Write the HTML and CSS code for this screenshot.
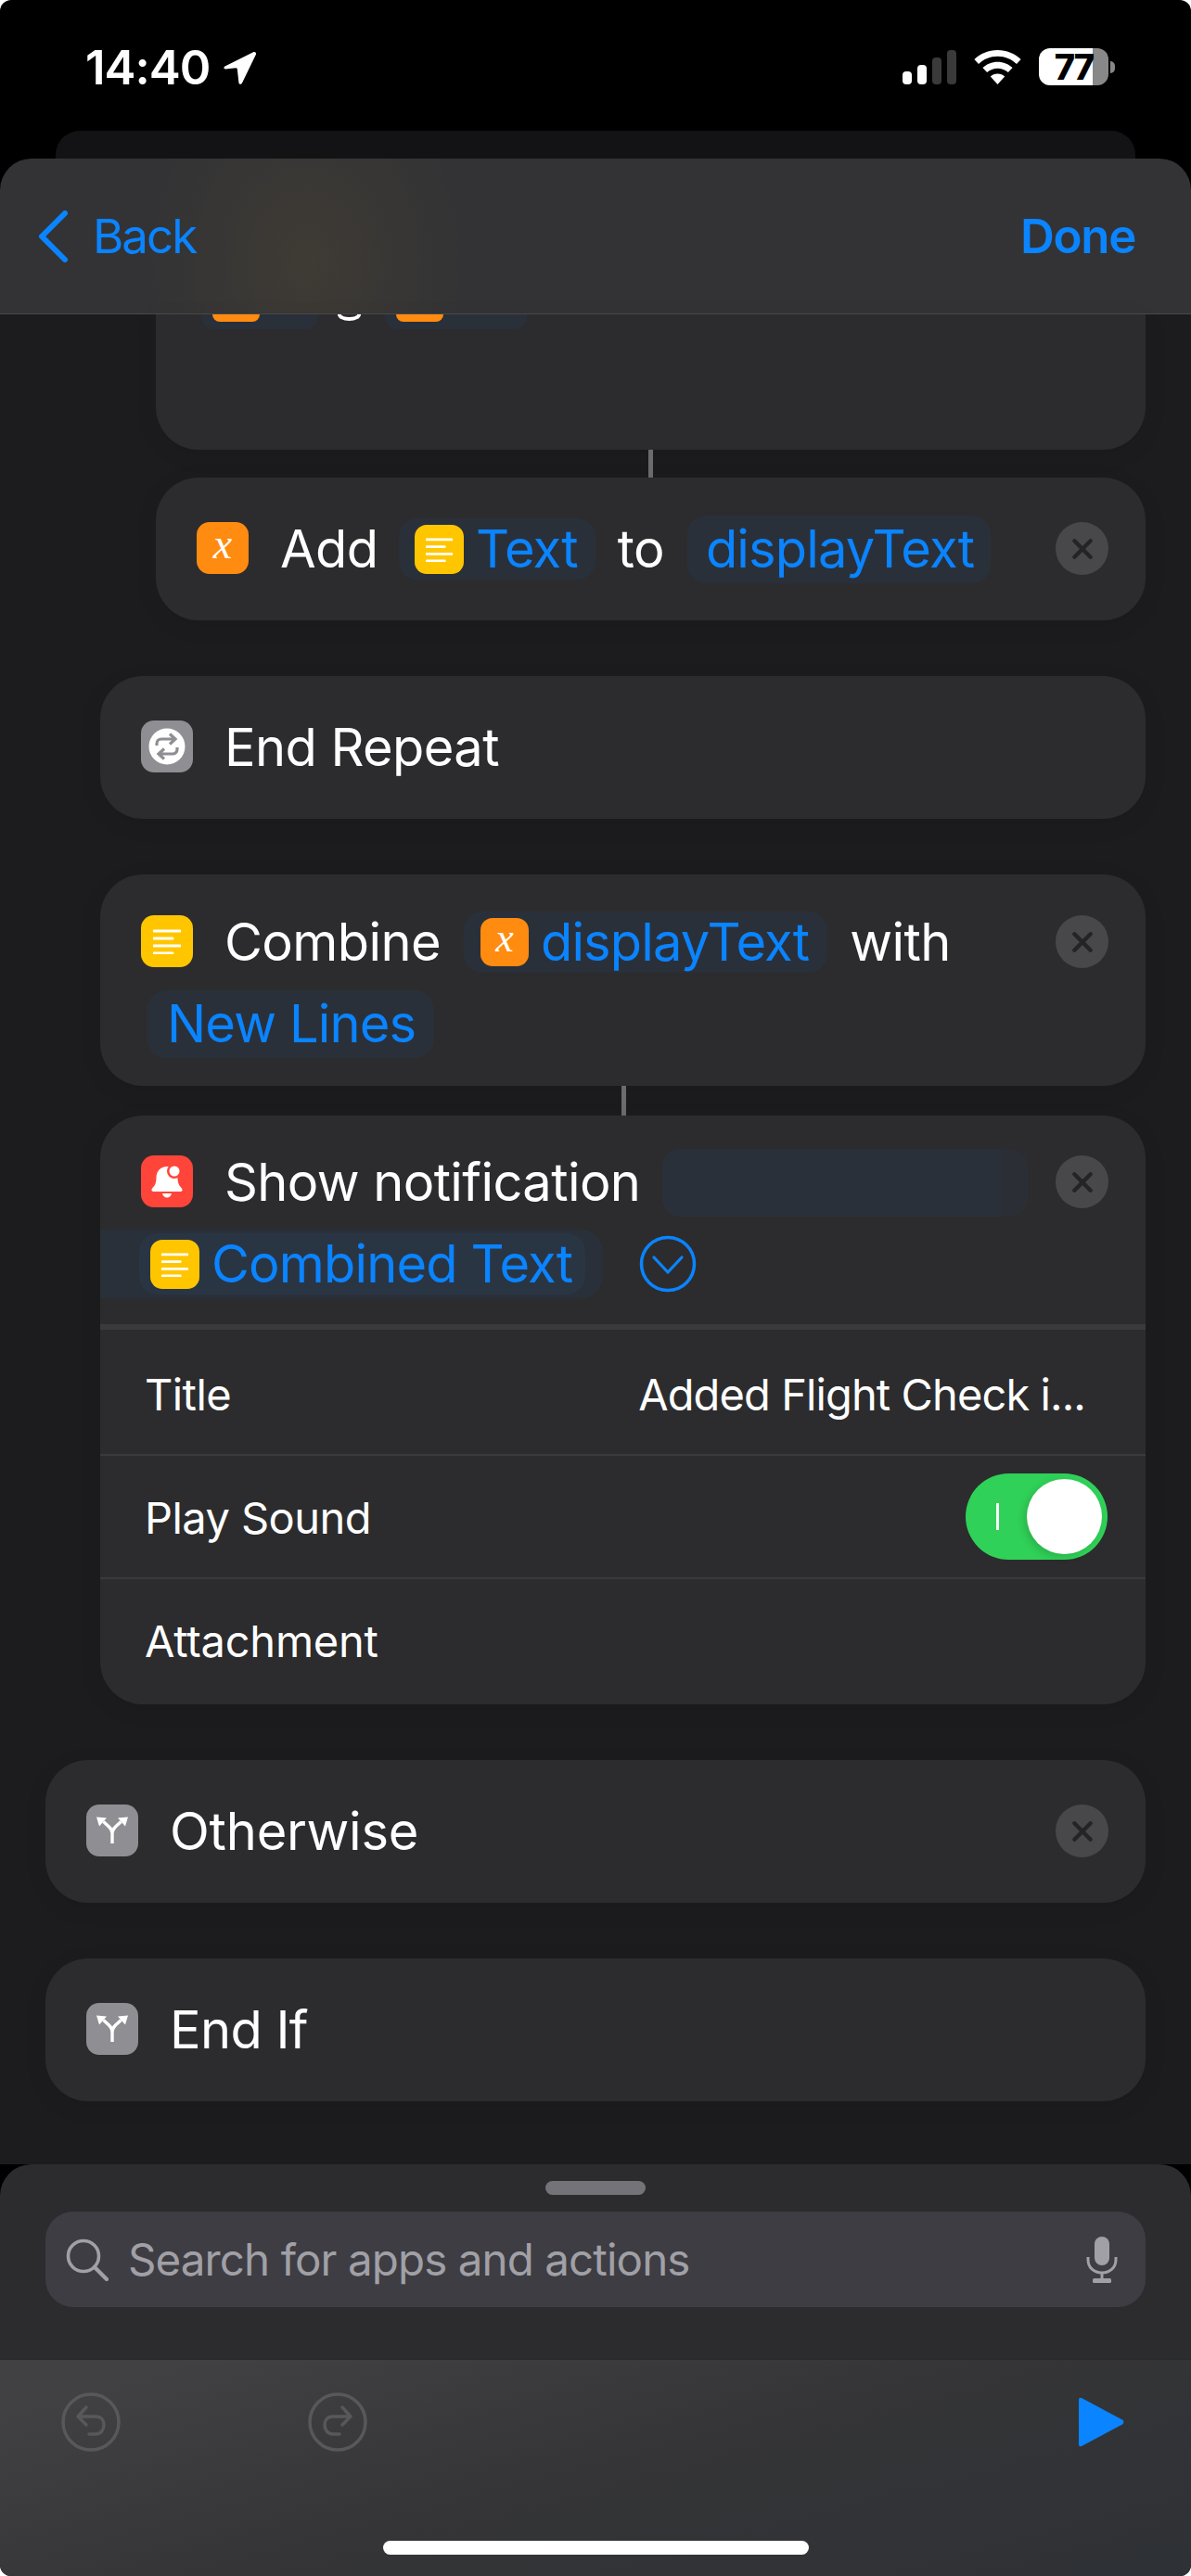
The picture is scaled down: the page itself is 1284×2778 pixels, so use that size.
FILE: index.html
```html
<!DOCTYPE html>
<html lang="en">
<head>
<meta charset="utf-8">
<title>Shortcut editor</title>
<link rel="stylesheet" href="styles.css">
</head>
<body>
<div class="screen">
  <header class="status">
    <div class="status-left">
      <span class="time">14:40</span>
      <svg class="loc" viewBox="0 0 38 38"><path d="M2.5 17.5 33 2.200c2-1 3.700.8 2.800 2.800L21 35.500c-1 2-3.400 1.600-3.600-.6l-1.600-14.300c-.1-.8-.5-1.200-1.300-1.300L3.200 20.400c-2-.2-2.500-2-.7-2.900z" fill="#fff"/></svg>
    </div>
    <div class="status-right">
      <div class="signal"><i class="bar b1"></i><i class="bar b2"></i><i class="bar b3"></i><i class="bar b4"></i></div>
      <svg class="wifi" viewBox="0 0 51 37"><path d="M25.500 0C35.200 0 44 3.800 50.600 10l-4.600 5C40.600 9.900 33.400 6.800 25.500 6.800S10.400 9.900 5 15L.4 10C7 3.800 15.800 0 25.500 0z" fill="#fff"/><path d="M25.500 12.800c6.200 0 11.800 2.400 16.100 6.300l-4.700 5c-3-2.700-7-4.400-11.400-4.400s-8.400 1.700-11.400 4.400l-4.700-5c4.300-3.900 9.900-6.300 16.100-6.300z" fill="#fff"/><path d="M25.500 25.500c3 0 5.700 1.100 7.700 3L25.500 37l-7.700-8.500c2-1.900 4.700-3 7.700-3z" fill="#fff"/></svg>
      <div class="battery"><div class="batt-body"><span class="batt-num">77</span></div><i class="batt-nub"></i></div>
    </div>
  </header>

  <div class="back-sheet"></div>

  <nav class="navbar">
    <div class="nav-back">
      <svg class="chevron" viewBox="0 0 32 56"><path d="M29 3 4 28l25 25" fill="none" stroke="#0a84ff" stroke-width="6" stroke-linecap="round" stroke-linejoin="round"/></svg>
      <span>Back</span>
    </div>
    <span class="nav-done">Done</span>
  </nav>

  <main class="canvas">
    <section class="card lvl2 card-clipped">
      <div class="peek">
        <span class="peek-pill pp1"><i class="peek-icon"></i></span>
        <i class="peek-c"></i>
        <span class="peek-pill pp2"><i class="peek-icon"></i></span>
      </div>
    </section>
    <div class="link link-a"></div>
    <section class="card lvl2 head">
      <div class="icon orange"><span class="x">x</span></div>
      <div class="tokens">
        <div class="line add-line">
          <span class="word w-add">Add</span>
          <span class="pill pill-text">
            <span class="icon-s yellow"><svg class="lines" viewBox="0 0 30 28"><path d="M1 3h28M1 11h20M1 19h28M1 27h20" stroke="#fff" stroke-width="3" stroke-linecap="round"/></svg></span>
            <span class="blue">Text</span>
          </span>
          <span class="word w-to">to</span>
          <span class="pill pill-var"><span class="blue">displayText</span></span>
        </div>
      </div>
      <div class="close"><svg viewBox="0 0 24 24"><path d="M4 4l16 16M20 4 4 20" stroke="#242426" stroke-width="4" stroke-linecap="round"/></svg></div>
    </section>

    <section class="card lvl1 head end-repeat">
      <div class="icon grey">
        <svg viewBox="0 0 56 56"><circle cx="28" cy="28" r="19.500" fill="#fff"/><path d="M17 27v-2c0-3 2-5 5-5h13M31 14.500l6 5.500-6 5.500M39 29v2c0 3-2 5-5 5H21M25 30.500 19 36l6 5.500" fill="none" stroke="#8e8e93" stroke-width="3.200"/></svg>
      </div>
      <div class="tokens"><div class="line"><span class="word">End Repeat</span></div></div>
    </section>

    <section class="card lvl1 head two-line combine">
      <div class="icon yellow icon-big"><svg class="lines" viewBox="0 0 30 28"><path d="M1 3h28M1 11h20M1 19h28M1 27h20" stroke="#fff" stroke-width="3" stroke-linecap="round"/></svg></div>
      <div class="tokens">
        <div class="line">
          <span class="word">Combine</span>
          <span class="pill pill-display">
            <span class="icon-s orange"><span class="x x-s">x</span></span>
            <span class="blue">displayText</span>
          </span>
          <span class="word w-with">with</span>
        </div>
        <div class="line line-out"><span class="pill pill-lines"><span class="blue">New Lines</span></span></div>
      </div>
      <div class="close"><svg viewBox="0 0 24 24"><path d="M4 4l16 16M20 4 4 20" stroke="#242426" stroke-width="4" stroke-linecap="round"/></svg></div>
    </section>
    <div class="link link-b"></div>

    <section class="card lvl1 notif">
      <div class="head two-line notif-head">
        <div class="icon red">
          <svg viewBox="0 0 56 56"><path d="M28 12c-7 0-11.500 5-11.500 12 0 5-1 8-4 11-1.500 1.500-1.500 4 1 4h29c2.500 0 2.500-2.500 1-4-3-3-4-6-4-11 0-7-4.500-12-11.500-12z" fill="#fff"/><circle cx="36" cy="17" r="8" fill="#ff453a"/><circle cx="36" cy="17" r="5.500" fill="#fff"/><path d="M23 41h10c-.6 2.800-2.500 4.500-5 4.500s-4.400-1.700-5-4.500z" fill="#fff"/></svg>
        </div>
        <div class="tokens">
          <div class="line">
            <span class="word">Show notification</span>
            <span class="pill pill-empty"></span>
          </div>
          <div class="line">
            <span class="band">
              <span class="pill pill-combined">
                <span class="icon-s yellow"><svg class="lines" viewBox="0 0 30 28"><path d="M1 3h28M1 11h20M1 19h28M1 27h20" stroke="#fff" stroke-width="3" stroke-linecap="round"/></svg></span>
                <span class="blue">Combined Text</span>
              </span>
            </span>
            <svg class="expand" viewBox="0 0 62 62"><circle cx="31" cy="31" r="28.500" fill="none" stroke="#0a84ff" stroke-width="3.500"/><path d="M16 24l15 16 15-16" fill="none" stroke="#0a84ff" stroke-width="3.200" stroke-linecap="round" stroke-linejoin="round"/></svg>
          </div>
        </div>
        <div class="close"><svg viewBox="0 0 24 24"><path d="M4 4l16 16M20 4 4 20" stroke="#242426" stroke-width="4" stroke-linecap="round"/></svg></div>
      </div>
      <div class="param p-title"><span>Title</span><span class="value">Added Flight Check i...</span></div>
      <div class="param p-sound"><span>Play Sound</span><div class="toggle"><i class="toggle-mark"></i><i class="knob"></i></div></div>
      <div class="param p-attach"><span class="attach-label">Attachment</span></div>
    </section>

    <section class="card lvl0 head otherwise">
      <div class="icon grey">
        <svg viewBox="0 0 56 56"><path d="M28 42V31M28 31c0-3-1.500-5-3.500-7l-6-5.500M28 31c0-3 1.500-5 3.500-7l6-5.500" fill="none" stroke="#fff" stroke-width="3.400"/><path d="M11 13.500l11 1-8 9zM45 13.500l-11 1 8 9z" fill="#fff"/></svg>
      </div>
      <div class="tokens"><div class="line"><span class="word w-other">Otherwise</span></div></div>
      <div class="close"><svg viewBox="0 0 24 24"><path d="M4 4l16 16M20 4 4 20" stroke="#242426" stroke-width="4" stroke-linecap="round"/></svg></div>
    </section>

    <section class="card lvl0 head endif">
      <div class="icon grey">
        <svg viewBox="0 0 56 56"><path d="M28 42V31M28 31c0-3-1.500-5-3.500-7l-6-5.500M28 31c0-3 1.500-5 3.500-7l6-5.500" fill="none" stroke="#fff" stroke-width="3.400"/><path d="M11 13.500l11 1-8 9zM45 13.500l-11 1 8 9z" fill="#fff"/></svg>
      </div>
      <div class="tokens"><div class="line"><span class="word">End If</span></div></div>
    </section>
  </main>

  <section class="sheet">
    <div class="handle"></div>
    <div class="search">
      <svg class="search-icon" viewBox="0 0 46 46"><circle cx="19" cy="19" r="16.500" fill="none" stroke="#a0a0a6" stroke-width="3.600"/><path d="M31 31l13 13" stroke="#a0a0a6" stroke-width="4.200" stroke-linecap="round"/></svg>
      <span class="search-text">Search for apps and actions</span>
      <svg class="mic" viewBox="0 0 36 50"><rect x="10" y="0" width="16" height="31" rx="8" fill="#a0a0a6"/><path d="M3 22v3c0 8.500 6.500 14 15 14s15-5.500 15-14v-3" fill="none" stroke="#a0a0a6" stroke-width="3"/><path d="M18 39v7" stroke="#a0a0a6" stroke-width="3"/><rect x="8" y="45" width="20" height="5" rx="1.500" fill="#a0a0a6"/></svg>
    </div>
  </section>

  <footer class="toolbar">
    <div class="tool-row">
      <svg class="tool tool-undo" viewBox="0 0 64 64"><circle cx="32" cy="32" r="30" fill="none" stroke="#58585b" stroke-width="3.500"/><path d="M27 16 18 26l9 9M18 26h19c6 0 9 4 9 9s-3 10-9 10h-7" fill="none" stroke="#58585b" stroke-width="3.500" stroke-linecap="round" stroke-linejoin="round"/></svg>
      <svg class="tool tool-redo" viewBox="0 0 64 64"><circle cx="32" cy="32" r="30" fill="none" stroke="#58585b" stroke-width="3.500"/><path d="M37 16l9 10-9 9M46 26H27c-6 0-9 4-9 9s3 10 9 10h7" fill="none" stroke="#58585b" stroke-width="3.500" stroke-linecap="round" stroke-linejoin="round"/></svg>
      <svg class="play" viewBox="0 0 49 54"><path d="M3 1 47 24.500q3 2.500 0 5L3 53q-3 1-3-2V3q0-3 3-2z" fill="#0a84ff"/></svg>
    </div>
    <div class="home-bar"></div>
  </footer>
</div>
</body>
</html>
```
FILE: styles.css
```css
* { box-sizing: border-box; }
html, body { margin: 0; padding: 0; background: #fff; }
.screen {
  width: 1284px; height: 2778px; overflow: hidden; background: #000; border-radius: 12px;
  display: flex; flex-direction: column;
  font-family: "Inter", "Roboto", "Liberation Sans", sans-serif; color: #fff;
}
/* status bar */
.status { height: 141px; flex: none; display: flex; justify-content: space-between; padding: 52px 82px 0 92px; }
.status-left { display: flex; align-items: flex-start; }
.time { font-size: 51px; font-weight: 600; line-height: 42px; letter-spacing: -1px; }
.loc { width: 38px; height: 38px; margin: 2px 0 0 14px; }
.status-right { display: flex; align-items: flex-start; }
.signal { display: flex; align-items: flex-end; gap: 6px; height: 37px; margin-top: 2px; }
.bar { width: 10px; border-radius: 4px; display: block; }
.b1 { height: 14px; background: #fff; }
.b2 { height: 21px; background: #fff; }
.b3 { height: 29px; background: #3a3a3a; }
.b4 { height: 37px; background: #3a3a3a; }
.wifi { width: 51px; height: 37px; margin: 2px 0 0 19px; }
.battery { display: flex; align-items: center; margin-left: 19px; height: 40px; }
.batt-body {
  width: 75px; height: 40px; border-radius: 12px;
  background: linear-gradient(90deg, #fff 77%, #888 77%);
  display: flex; align-items: center; justify-content: center;
}
.batt-num { color: #000; font-size: 38px; font-weight: 800; line-height: 40px; letter-spacing: -2px; }
.batt-nub { width: 5px; height: 13px; background: #888; border-radius: 0 7px 7px 0; margin-left: 2px; display: block; }

/* stacked sheets */
.back-sheet { flex: none; height: 30px; margin: 0 60px; background: #131315; border-radius: 26px 26px 0 0; }
.navbar {
  flex: none; height: 168px; padding: 0 60px 0 41px;
  display: flex; justify-content: space-between; align-items: flex-start;
  border-radius: 34px 34px 0 0; border-bottom: 1px solid #4a4a4c;
  background:
    radial-gradient(ellipse 170px 210px at 330px 110px, rgba(110, 90, 50, .2), rgba(110, 90, 50, 0) 100%),
    #333335;
  color: #0a84ff; font-size: 51px;
}
.nav-back { display: flex; align-items: flex-start; margin-top: 56px; }
.chevron { width: 32px; height: 56px; }
.nav-back span { line-height: 56px; margin-left: 27px; letter-spacing: -2px; }
.nav-done { font-weight: 600; line-height: 56px; margin-top: 56px; letter-spacing: -1.300px; }

/* canvas */
.canvas { flex: none; height: 1995px; background: #1c1c1e; padding-right: 49px; font-size: 56px; }
.card { background: #2c2c2e; border-radius: 46px; box-shadow: 0 6px 24px rgba(0, 0, 0, .08); }
.lvl0 { margin-left: 49px; }
.lvl1 { margin-left: 108px; }
.lvl2 { margin-left: 168px; }
.link { width: 5px; background: #6b6b70; }
.link-a { height: 30px; margin-left: 699px; }
.link-b { height: 32px; margin-left: 670px; }
.card-clipped { height: 146px; border-radius: 0 0 46px 46px; overflow: hidden; }
.peek { display: flex; align-items: flex-start; height: 16px; padding-left: 49px; }
.peek-pill { display: block; height: 16px; background: #2a303a; border-radius: 0 0 14px 14px; padding-left: 12px; }
.pp1 { width: 126px; }
.pp2 { width: 153px; margin-left: 26px; }
.peek-icon { display: block; width: 51px; height: 8px; background: #ff8b10; border-radius: 0 0 12px 12px; }
.peek-c { display: block; width: 25px; height: 7px; margin-left: 21px; border: 4px solid #fff; border-top: 0; border-radius: 0 0 13px 13px / 0 0 7px 7px; }

.head { display: flex; align-items: flex-start; min-height: 154px; padding: 33px 40px 33px 44px; }
.icon { flex: none; width: 56px; height: 56px; border-radius: 14px; margin-top: 15px; display: flex; align-items: center; justify-content: center; }
.icon svg { display: block; width: 56px; height: 56px; }
.icon svg.lines { width: 30px; height: 28px; }
.icon-s { flex: none; width: 53px; height: 53px; border-radius: 13px; display: flex; align-items: center; justify-content: center; margin-right: 13px; }
.icon-s svg.lines { width: 29px; height: 27px; display: block; }
.orange { background: #ff8b10; }
.yellow { background: #ffc600; }
.grey { background: #8e8e93; }
.red { background: #ff453a; }
.x { font-family: "Liberation Serif", serif; font-style: italic; font-weight: 400; color: #fff; font-size: 46px; line-height: 40px; margin-top: -8px; }
.x-s { font-size: 44px; }
.tokens { flex: 1; min-width: 0; margin-left: 34px; }
.line { display: flex; align-items: center; height: 88px; white-space: nowrap; }
.word { letter-spacing: -.6px; }
.blue { color: #0a84ff; letter-spacing: -.85px; }
.pill { display: flex; align-items: center; background: #2a303a; border-radius: 20px; }
.close { flex: none; width: 57px; height: 57px; border-radius: 50%; background: #48484a; margin-top: 15px; display: flex; align-items: center; justify-content: center; }
.close svg { width: 26px; height: 26px; display: block; }

.add-line .w-add { width: 103px; }
.pill-text { height: 66px; margin-left: 25px; padding: 0 19px 0 17px; }
.w-to { margin-left: 24px; }
.pill-var { height: 73px; margin-left: 25px; padding: 0 18px 0 20px; }
.end-repeat { margin-top: 60px; }
.combine { margin-top: 60px; }
.two-line { padding-top: 29px; padding-bottom: 23px; }
.pill-display { height: 66px; margin-left: 25px; padding: 0 20px 0 18px; }
.pill-display .icon-s { width: 52px; height: 52px; }
.w-with { margin-left: 24px; }
.line-out { margin-left: -83px; }
.pill-lines { height: 73px; padding: 0 20px 0 21px; }

.notif { overflow: hidden; }
.notif-head { border-bottom: 6px solid #3a3a3c; padding-top: 28px; padding-bottom: 21px; }
.pill-empty { width: 394px; height: 73px; margin-left: 24px; background: linear-gradient(90deg, #2a303a 93%, #2b2e34 93%); }
.band { display: flex; align-items: center; height: 74px; margin-left: -134px; padding: 0 19px 0 42px; background: #2a303a; border-radius: 0 24px 24px 0; }
.pill-combined { height: 66px; padding: 0 14px 0 12px; background: #2a3544; }
.expand { width: 62px; height: 62px; margin-left: 39px; flex: none; }
.param { display: flex; justify-content: space-between; align-items: center; font-size: 47px; padding: 0 65px 0 48px; border-bottom: 2px solid #3a3a3c; }
.param span { letter-spacing: -.55px; }
.param .value { letter-spacing: -.9px; }
.param .attach-label { letter-spacing: -.25px; }
.p-title { height: 136px; padding-top: 5px; }
.p-sound { height: 133px; padding-top: 2px; padding-right: 41px; }
.p-attach { height: 135px; border-bottom: 0; padding-bottom: 2px; }
.toggle { width: 153px; height: 93px; border-radius: 47px; background: #30d158; display: flex; align-items: center; padding: 0 6px 0 33px; justify-content: space-between; margin-top: -2px; }
.toggle-mark { width: 3px; height: 29px; background: #fff; display: block; }
.knob { width: 81px; height: 81px; border-radius: 50%; background: #fff; display: block; box-shadow: -3px 3px 8px rgba(0,0,0,.15); }
.otherwise { margin-top: 60px; }
.endif { margin-top: 60px; }
.w-other { letter-spacing: -.2px; }

/* bottom sheet */
.sheet { flex: none; height: 210px; padding: 18px 49px 0; background: #2c2c2e; border-radius: 34px 34px 0 0; display: flex; flex-direction: column; }
.handle { flex: none; width: 108px; height: 15px; border-radius: 8px; background: #737378; margin: 0 auto 18px; }
.search { flex: none; height: 103px; border-radius: 30px; background: #3e3d43; display: flex; align-items: center; padding: 0 29px 0 22px; }
.search-icon { width: 46px; height: 46px; flex: none; }
.search-text { flex: 1; font-size: 47.500px; color: #a0a0a6; margin-left: 21px; letter-spacing: -.9px; }
.mic { width: 36px; height: 50px; flex: none; }
.toolbar {
  flex: 1; border-top: 1px solid #2a2a2c;
  background: linear-gradient(165deg, #414143 10%, #353537 50%, #2e3135 100%);
  display: flex; flex-direction: column;
}
.tool-row { display: flex; align-items: center; height: 134px; padding: 0 72px 0 66px; }
.tool { width: 64px; height: 64px; flex: none; }
.tool-redo { margin-left: 202px; }
.play { width: 49px; height: 54px; margin-left: auto; flex: none; }
.home-bar { width: 459px; height: 15px; border-radius: 8px; background: #fff; margin: 61px auto 0; }
```
